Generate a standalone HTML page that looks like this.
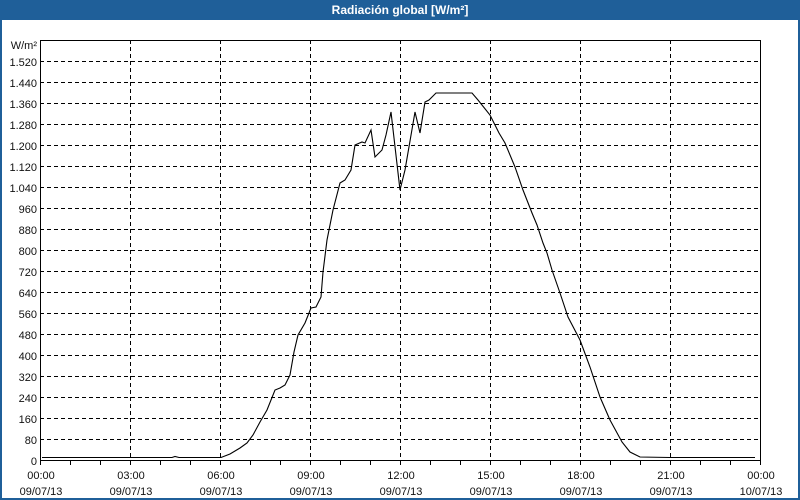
<!DOCTYPE html>
<html><head><meta charset="utf-8"><style>
html,body{margin:0;padding:0;background:#fff;}
body{width:800px;height:500px;overflow:hidden;position:relative;font-family:"Liberation Sans",sans-serif;}
#t{position:absolute;left:0;top:0;width:800px;height:20px;background:#1f5f99;color:#fff;font-weight:bold;font-size:12px;line-height:20px;text-align:center;}
#f{position:absolute;left:0;top:20px;width:796px;height:478px;border:2px solid #1f5f99;border-top:none;}
svg{position:absolute;left:0;top:0;}
text{font-family:"Liberation Sans",sans-serif;font-size:11px;fill:#111;}
</style></head><body>
<div id="t">Radiación global [W/m²]</div>
<div id="f"></div>
<svg width="800" height="500" xmlns="http://www.w3.org/2000/svg">
<g stroke="#000" stroke-width="1" stroke-dasharray="4,3" shape-rendering="crispEdges">
<line x1="40" x2="760" y1="439.5" y2="439.5"/><line x1="40" x2="760" y1="418.5" y2="418.5"/>
<line x1="40" x2="760" y1="397.5" y2="397.5"/><line x1="40" x2="760" y1="376.5" y2="376.5"/>
<line x1="40" x2="760" y1="355.5" y2="355.5"/><line x1="40" x2="760" y1="334.5" y2="334.5"/>
<line x1="40" x2="760" y1="313.5" y2="313.5"/><line x1="40" x2="760" y1="292.5" y2="292.5"/>
<line x1="40" x2="760" y1="271.5" y2="271.5"/><line x1="40" x2="760" y1="250.5" y2="250.5"/>
<line x1="40" x2="760" y1="229.5" y2="229.5"/><line x1="40" x2="760" y1="208.5" y2="208.5"/>
<line x1="40" x2="760" y1="187.5" y2="187.5"/><line x1="40" x2="760" y1="166.5" y2="166.5"/>
<line x1="40" x2="760" y1="145.5" y2="145.5"/><line x1="40" x2="760" y1="124.5" y2="124.5"/>
<line x1="40" x2="760" y1="103.5" y2="103.5"/><line x1="40" x2="760" y1="82.5" y2="82.5"/>
<line x1="40" x2="760" y1="61.5" y2="61.5"/>
<line x1="130.5" x2="130.5" y1="40" y2="460"/><line x1="220.5" x2="220.5" y1="40" y2="460"/>
<line x1="310.5" x2="310.5" y1="40" y2="460"/><line x1="400.5" x2="400.5" y1="40" y2="460"/>
<line x1="490.5" x2="490.5" y1="40" y2="460"/><line x1="580.5" x2="580.5" y1="40" y2="460"/>
<line x1="670.5" x2="670.5" y1="40" y2="460"/>
</g>
<g stroke="#000" stroke-width="1" shape-rendering="crispEdges" fill="none">
<rect x="40.5" y="40.5" width="720" height="420"/>
<path d="M40.5 461v4M70.5 461v4M100.5 461v4M130.5 461v4M160.5 461v4M190.5 461v4M220.5 461v4M250.5 461v4M280.5 461v4M310.5 461v4M340.5 461v4M370.5 461v4M400.5 461v4M430.5 461v4M460.5 461v4M490.5 461v4M520.5 461v4M550.5 461v4M580.5 461v4M610.5 461v4M640.5 461v4M670.5 461v4M700.5 461v4M730.5 461v4M760.5 461v4"/>
</g>
<polyline fill="none" stroke="#000" stroke-width="1.1" points="42,457.5 172,457.5 175,456.5 179,457.5 221,457.5 230,454 240,448 247,443 253,435 260,422 267,410 275,390 280,388 285,385 290,375 294,352 298,335 305,323 311,308 316,307 321,297 323,272 327,240 333,210 340,183 345,180 351,170 355,145 362,142 365,143 371,130 375,157 382,150 386,135 391,112 400,190 405,170 415,112 420,133 425,102 429,100 436,93 472,93 478,100 490,115 499,133 505,143 515,167 523,190 532,213 537,225 543,243 547,253 552,270 560,293 568,317 580,340 590,367 600,397 610,420 622,442 630,452 640,457 670,457.5 755,457.5"/>
<g text-anchor="end">
<text x="37" y="49">W/m²</text>
<text x="37" y="66">1.520</text><text x="37" y="87">1.440</text><text x="37" y="108">1.360</text>
<text x="37" y="129">1.280</text><text x="37" y="150">1.200</text><text x="37" y="171">1.120</text>
<text x="37" y="192">1.040</text><text x="37" y="213">960</text><text x="37" y="234">880</text>
<text x="37" y="255">800</text><text x="37" y="276">720</text><text x="37" y="297">640</text>
<text x="37" y="318">560</text><text x="37" y="339">480</text><text x="37" y="360">400</text>
<text x="37" y="381">320</text><text x="37" y="402">240</text><text x="37" y="423">160</text>
<text x="37" y="444">80</text><text x="37" y="465">0</text>
</g>
<g text-anchor="middle">
<text x="41" y="479">00:00</text><text x="41" y="495">09/07/13</text>
<text x="131" y="479">03:00</text><text x="131" y="495">09/07/13</text>
<text x="221" y="479">06:00</text><text x="221" y="495">09/07/13</text>
<text x="311" y="479">09:00</text><text x="311" y="495">09/07/13</text>
<text x="401" y="479">12:00</text><text x="401" y="495">09/07/13</text>
<text x="491" y="479">15:00</text><text x="491" y="495">09/07/13</text>
<text x="581" y="479">18:00</text><text x="581" y="495">09/07/13</text>
<text x="671" y="479">21:00</text><text x="671" y="495">09/07/13</text>
<text x="761" y="479">00:00</text><text x="761" y="495">10/07/13</text>
</g>
</svg>
</body></html>
